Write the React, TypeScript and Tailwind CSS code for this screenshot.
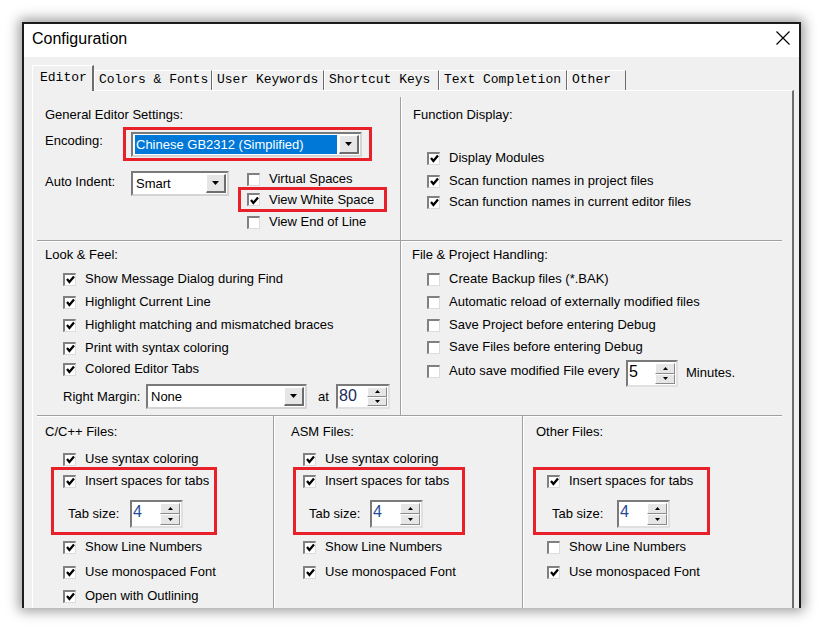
import React from 'react';

const Check = ({ checked }: { checked?: boolean }) => (
  <span className="w-[13px] h-[13px] shrink-0 bg-white border-t-2 border-l-2 border-r border-b border-t-[#808080] border-l-[#808080] border-r-[#dcdcdc] border-b-[#dcdcdc] flex items-center justify-center">
    {checked && (
      <svg width="9" height="9" viewBox="0 0 9 9">
        <path d="M1 4 L3.4 6.9 L8 1.4" stroke="#000" strokeWidth="2.3" fill="none" />
      </svg>
    )}
  </span>
);

const CheckItem = ({ label, checked, className = '' }: { label: string; checked?: boolean; className?: string }) => (
  <div className={`flex items-center h-[16px] ${className}`}>
    <Check checked={checked} />
    <span className="ml-[9px] whitespace-nowrap">{label}</span>
  </div>
);

const Arrow = ({ small, up }: { small?: boolean; up?: boolean }) =>
  small ? (
    <svg width="5" height="3" viewBox="0 0 5 3">
      <path d={up ? 'M2.5 0 L5 3 L0 3 Z' : 'M0 0 L5 0 L2.5 3 Z'} fill="#000" />
    </svg>
  ) : (
    <svg width="7" height="4" viewBox="0 0 7 4">
      <path d="M0 0 L7 0 L3.5 4 Z" fill="#000" />
    </svg>
  );

const DropBtn = () => (
  <div className="w-[20px] shrink-0 bg-[#e6e6e6] border-t border-l border-r-2 border-b-2 border-t-white border-l-white border-r-[#6d6d6d] border-b-[#6d6d6d] flex items-center justify-center">
    <Arrow />
  </div>
);

const Combo = ({ value, cls, selected }: { value: string; cls: string; selected?: boolean }) => (
  <div className={`flex bg-white border-2 border-t-[#7a7a7a] border-l-[#7a7a7a] border-r-[#d4d4d4] border-b-[#d4d4d4] p-px ${cls}`}>
    {selected ? (
      <div className="flex-1 ml-px bg-[#0078d7] text-white flex items-center pl-px whitespace-nowrap">{value}</div>
    ) : (
      <div className="flex-1 flex items-center pl-[2px] whitespace-nowrap">{value}</div>
    )}
    <div className="ml-[2px] flex">
      <DropBtn />
    </div>
  </div>
);

const SpinBtn = ({ up }: { up?: boolean }) => (
  <div className="flex-1 bg-[#e6e6e6] border-t border-l border-r border-b border-t-white border-l-white border-r-[#8a8a8a] border-b-[#8a8a8a] flex items-center justify-center">
    <Arrow small up={up} />
  </div>
);

const Spin = ({ value, cls, numCls = 'text-black' }: { value: string; cls: string; numCls?: string }) => (
  <div className={`flex bg-white border-2 border-t-[#7a7a7a] border-l-[#7a7a7a] border-r-[#e0e0e0] border-b-[#e0e0e0] ${cls}`}>
    <span className={`flex-1 pl-px text-[16px] leading-[20px] ${numCls}`}>{value}</span>
    <div className="flex flex-col w-[21px] py-px pr-px">
      <SpinBtn up />
      <SpinBtn />
    </div>
  </div>
);

const RedBox = ({ cls, children }: { cls: string; children: React.ReactNode }) => (
  <div className={`border-[3px] border-[#e8202a] ${cls}`}>{children}</div>
);

const TabSize = ({ pl, labelW }: { pl: string; labelW: string }) => (
  <div className={`flex items-center h-[28px] mt-[11px] ${pl}`}>
    <span className={labelW}>Tab size:</span>
    <Spin value="4" cls="w-[53px] h-[28px]" numCls="text-[#1f4a9a]" />
  </div>
);

const tabs = [
  { label: 'Colors & Fonts', w: 'w-[118px]' },
  { label: 'User Keywords', w: 'w-[112px]' },
  { label: 'Shortcut Keys', w: 'w-[115px]' },
  { label: 'Text Completion', w: 'w-[128px]' },
  { label: 'Other', w: 'w-[59px]' },
];

export default function App() {
  return (
    <div className="w-[823px] h-[630px] bg-white overflow-hidden pl-[22px] pt-[22px] font-['Liberation_Sans',Arial,sans-serif] text-[13px] leading-[16px] text-black">
      <div className="w-[779px] h-[586px] flex flex-col bg-[#f0f0f0] border-t-2 border-l-2 border-r-2 border-[#1c1c1c] shadow-[0_0_12px_3px_rgba(0,0,0,0.4)]">
        {/* title bar */}
        <div className="h-[33px] bg-white flex items-start justify-between pl-[8px] pr-[9px] pt-[6px] shrink-0">
          <span className="text-[16px] leading-[18px]">Configuration</span>
          <svg width="14" height="14" viewBox="0 0 14 14" className="mt-[1px]">
            <path d="M0.5 0.5 L13.5 13.5 M13.5 0.5 L0.5 13.5" stroke="#000" strokeWidth="1.2" />
          </svg>
        </div>

        {/* tabs */}
        <div className="flex items-end h-[26px] mt-[8px] -mb-px ml-[8px] relative z-10 font-['Liberation_Mono',monospace] text-[13px] shrink-0">
          <div className="w-[62px] h-[26px] bg-[#f0f0f0] border-t border-l border-r-2 border-t-white border-l-white border-r-[#6d6d6d] pl-[7px] pt-[4px]">
            Editor
          </div>
          {tabs.map((t) => (
            <div
              key={t.label}
              className={`${t.w} h-[20px] mb-px border-t border-l border-r border-t-white border-l-white border-r-[#6d6d6d] pl-[4px] pt-[1px] whitespace-nowrap`}
            >
              {t.label}
            </div>
          ))}
        </div>

        {/* panel */}
        <div className="ml-[8px] w-[762px] flex-1 flex flex-col border-t border-l border-r-2 border-t-white border-l-white border-r-[#6d6d6d] pt-[6px] pl-[4px]">
          {/* row 1 */}
          <div className="flex w-[745px] h-[144px] border-b border-[#a0a0a0] shadow-[0_1px_0_#fff] shrink-0">
            <div className="w-[364px] border-r border-[#a0a0a0] shadow-[1px_0_0_#fff] pl-[8px] pt-[10px]">
              <div className="h-[16px]">General Editor Settings:</div>
              <div className="flex items-start mt-[4px]">
                <span className="w-[78px] mt-[6px]">Encoding:</span>
                <RedBox cls="w-[249px] h-[34px] pl-[5px] pt-[2px]">
                  <Combo value="Chinese GB2312 (Simplified)" cls="w-[231px] h-[25px]" selected />
                </RedBox>
              </div>
              <div className="flex items-start mt-[9px]">
                <span className="w-[86px] mt-[4px]">Auto Indent:</span>
                <Combo value="Smart" cls="w-[98px] h-[25px] mt-px" />
                <div className="ml-[9px] flex flex-col">
                  <CheckItem label="Virtual Spaces" className="pl-[9px] mt-px" />
                  <RedBox cls="w-[149px] h-[25px] pl-[6px] flex items-center">
                    <CheckItem label="View White Space" checked />
                  </RedBox>
                  <CheckItem label="View End of Line" className="pl-[9px] mt-[2px]" />
                </div>
              </div>
            </div>
            <div className="flex-1 pl-[12px] pt-[10px]">
              <div className="h-[16px]">Function Display:</div>
              <CheckItem label="Display Modules" checked className="ml-[14px] mt-[27px]" />
              <CheckItem label="Scan function names in project files" checked className="ml-[14px] mt-[7px]" />
              <CheckItem label="Scan function names in current editor files" checked className="ml-[14px] mt-[5px]" />
            </div>
          </div>

          {/* row 2 */}
          <div className="flex w-[745px] h-[175px] border-b border-[#a0a0a0] shadow-[0_1px_0_#fff] shrink-0">
            <div className="w-[364px] border-r border-[#a0a0a0] shadow-[1px_0_0_#fff] pt-[6px]">
              <div className="h-[16px] pl-[8px]">Look &amp; Feel:</div>
              <div className="pl-[26px]">
                <CheckItem label="Show Message Dialog during Find" checked className="mt-[8px]" />
                <CheckItem label="Highlight Current Line" checked className="mt-[7px]" />
                <CheckItem label="Highlight matching and mismatched braces" checked className="mt-[7px]" />
                <CheckItem label="Print with syntax coloring" checked className="mt-[7px]" />
                <CheckItem label="Colored Editor Tabs" checked className="mt-[5px]" />
                <div className="flex items-center mt-[7px] h-[25px]">
                  <span className="w-[83px]">Right Margin:</span>
                  <Combo value="None" cls="w-[161px] h-[25px]" />
                  <span className="ml-[11px] w-[18px]">at</span>
                  <Spin value="80" cls="w-[54px] h-[25px]" numCls="text-[#1a2a5a] leading-[19px]" />
                </div>
              </div>
            </div>
            <div className="flex-1 pt-[6px]">
              <div className="h-[16px] pl-[11px]">File &amp; Project Handling:</div>
              <div className="pl-[26px]">
                <CheckItem label="Create Backup files (*.BAK)" className="mt-[8px]" />
                <CheckItem label="Automatic reload of externally modified files" className="mt-[7px]" />
                <CheckItem label="Save Project before entering Debug" className="mt-[7px]" />
                <CheckItem label="Save Files before entering Debug" className="mt-[6px]" />
                <div className="flex items-start mt-[5px]">
                  <div className="flex items-center h-[16px] mt-[3px]">
                    <Check />
                    <span className="ml-[9px] w-[177px] whitespace-nowrap">Auto save modified File every</span>
                  </div>
                  <Spin value="5" cls="w-[52px] h-[27px]" />
                  <span className="ml-[8px] mt-[5px]">Minutes.</span>
                </div>
              </div>
            </div>
          </div>

          {/* row 3 */}
          <div className="flex w-[745px] flex-1">
            <div className="w-[237px] border-r border-[#a0a0a0] shadow-[1px_0_0_#fff] pt-[8px]">
              <div className="h-[16px] pl-[8px]">C/C++ Files:</div>
              <CheckItem label="Use syntax coloring" checked className="ml-[26px] mt-[11px]" />
              <RedBox cls="ml-[14px] w-[166px] h-[68px]">
                <CheckItem label="Insert spaces for tabs" checked className="ml-[9px] mt-[3px]" />
                <TabSize pl="pl-[14px]" labelW="w-[62px]" />
              </RedBox>
              <CheckItem label="Show Line Numbers" checked className="ml-[26px] mt-[4px]" />
              <CheckItem label="Use monospaced Font" checked className="ml-[26px] mt-[9px]" />
              <CheckItem label="Open with Outlining" checked className="ml-[26px] mt-[8px]" />
            </div>
            <div className="w-[249px] border-r border-[#a0a0a0] shadow-[1px_0_0_#fff] pt-[8px]">
              <div className="h-[16px] pl-[17px]">ASM Files:</div>
              <CheckItem label="Use syntax coloring" checked className="ml-[29px] mt-[11px]" />
              <RedBox cls="ml-[19px] w-[172px] h-[68px]">
                <CheckItem label="Insert spaces for tabs" checked className="ml-[7px] mt-[3px]" />
                <TabSize pl="pl-[13px]" labelW="w-[61px]" />
              </RedBox>
              <CheckItem label="Show Line Numbers" checked className="ml-[29px] mt-[4px]" />
              <CheckItem label="Use monospaced Font" checked className="ml-[29px] mt-[9px]" />
            </div>
            <div className="flex-1 pt-[8px]">
              <div className="h-[16px] pl-[13px]">Other Files:</div>
              <div className="h-[16px] mt-[11px]" />
              <RedBox cls="ml-[10px] w-[177px] h-[68px]">
                <CheckItem label="Insert spaces for tabs" checked className="ml-[11px] mt-[3px]" />
                <TabSize pl="pl-[16px]" labelW="w-[65px]" />
              </RedBox>
              <CheckItem label="Show Line Numbers" className="ml-[24px] mt-[4px]" />
              <CheckItem label="Use monospaced Font" checked className="ml-[24px] mt-[9px]" />
            </div>
          </div>
        </div>
      </div>
    </div>
  );
}
